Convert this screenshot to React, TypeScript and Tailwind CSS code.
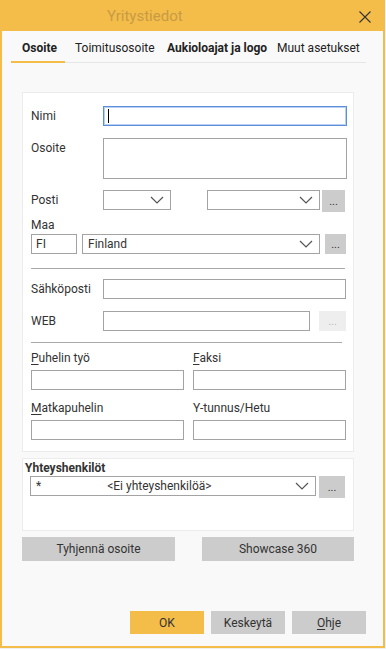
import React from 'react';

const font = { fontFamily: 'Roboto, "Liberation Sans", sans-serif' };

const Chevron: React.FC = () => (
  <svg width="14" height="8" viewBox="0 0 14 8" className="absolute right-[6px] top-1/2 -translate-y-1/2">
    <path d="M1 1 L7 7 L13 1" fill="none" stroke="#555" strokeWidth="1.2" />
  </svg>
);

const Select: React.FC<{ className?: string; children?: React.ReactNode }> = ({ className = '', children }) => (
  <div className={`relative h-[20px] border border-[#a3a3a3] bg-white flex items-center ${className}`}>
    {children}
    <Chevron />
  </div>
);

const Dots: React.FC<{ disabled?: boolean; className?: string }> = ({ disabled, className = '' }) => (
  <div
    className={`flex items-center justify-center text-[11px] leading-none ${
      disabled ? 'bg-[#eeeeee] text-[#bbb]' : 'bg-[#cccccc] text-[#333]'
    } ${className}`}
  >
    ...
  </div>
);

const Input: React.FC<{ className?: string }> = ({ className = '' }) => (
  <div className={`h-[20px] border border-[#a3a3a3] bg-white ${className}`} />
);

export default function App() {
  return (
    <div className="w-[386px] h-[649px] bg-[#f0f0f0] text-[12px] text-[#333]" style={font}>
      <div className="w-[385px] h-[648px] border-2 border-[#f4bd4a] bg-[#f9f9f9] flex flex-col">
        {/* Title bar */}
        <div className="h-[29px] bg-[#f4bd4a] flex items-center justify-between pl-[105px] pr-[12px]">
          <span className="text-[15px] text-[#c79b45]">Yritystiedot</span>
          <svg width="12" height="12" viewBox="0 0 12 12">
            <path d="M0.5 0.5 L11.5 11.5 M11.5 0.5 L0.5 11.5" stroke="#333" strokeWidth="1.1" />
          </svg>
        </div>

        <div className="flex-1 flex flex-col pl-[9px] pr-[17px]">
          {/* Tabs */}
          <div className="mt-[10px] flex border-b border-[#e6e6e6] text-[12px] leading-[14px] text-[#222] whitespace-nowrap">
            <div className="w-[54px] pl-[11px] pb-[6px] font-bold border-b-2 border-[#f4bd4a] -mb-px">Osoite</div>
            <div className="w-[102px] pl-[10px] pb-[6px]">Toimitusosoite</div>
            <div className="w-[110px] pb-[6px] font-bold">Aukioloajat ja logo</div>
            <div className="pb-[6px]">Muut asetukset</div>
          </div>

          {/* Address panel */}
          <div className="ml-[11px] mr-[12px] mt-[29px] bg-white border border-[#ececec] pl-[8px] pr-[6px] pt-[13px] pb-[11px]">
            <div className="flex">
              <div className="w-[72px] pt-[1px]">Nimi</div>
              <div className="flex-1 h-[20px] border border-[#5b8fdb] shadow-[inset_0_0_0_1px_#b9d0f0] bg-white flex items-center pl-[4px]">
                <span className="w-px h-[14px] bg-black" />
              </div>
            </div>
            <div className="flex mt-[12px]">
              <div className="w-[72px] pt-[1px]">Osoite</div>
              <div className="flex-1 h-[41px] border border-[#a3a3a3]" />
            </div>
            <div className="flex mt-[11px]">
              <div className="w-[72px] pt-[1px]">Posti</div>
              <Select className="w-[68px]" />
              <Select className="w-[113px] ml-[36px]" />
              <Dots className="w-[23px] h-[22px] ml-[2px]" />
            </div>
            <div className="mt-[6px] leading-[14px]">Maa</div>
            <div className="flex mt-[2px] pr-[1px]">
              <div className="w-[46px] h-[20px] border border-[#a3a3a3] flex items-center pl-[4px]">FI</div>
              <Select className="w-[238px] ml-[5px] pl-[5px]">Finland</Select>
              <Dots className="w-[21px] h-[20px] ml-[5px]" />
            </div>
            <div className="h-px bg-[#a8a8a8] mt-[14px] mr-[2px]" />
            <div className="flex mt-[10px]">
              <div className="w-[72px] pt-[1px]">Sähköposti</div>
              <Input className="flex-1 mr-px" />
            </div>
            <div className="flex mt-[12px]">
              <div className="w-[72px] pt-[1px]">WEB</div>
              <Input className="w-[207px]" />
              <Dots disabled className="w-[27px] h-[20px] ml-[9px]" />
            </div>
            <div className="h-px bg-[#a8a8a8] mt-[11px] mr-[5px]" />
            <div className="grid grid-cols-2 gap-x-[9px] mt-[8px] mr-px">
              <div>
                <div className="leading-[14px]">
                  <span className="underline underline-offset-2">P</span>uhelin työ
                </div>
                <Input className="mt-[5px]" />
              </div>
              <div>
                <div className="leading-[14px]">
                  <span className="underline underline-offset-2">F</span>aksi
                </div>
                <Input className="mt-[5px]" />
              </div>
              <div className="mt-[11px]">
                <div className="leading-[14px]">
                  <span className="underline underline-offset-2">M</span>atkapuhelin
                </div>
                <Input className="mt-[5px]" />
              </div>
              <div className="mt-[11px]">
                <div className="leading-[14px]">Y-tunnus/Hetu</div>
                <Input className="mt-[5px]" />
              </div>
            </div>
          </div>

          {/* Contact persons */}
          <div className="ml-[11px] mr-[12px] mt-[6px] h-[73px] bg-white border border-[#ececec] pl-[2px] pt-[2px]">
            <div className="font-bold leading-[14px]">Yhteyshenkilöt</div>
            <div className="flex mt-[1px] pl-[5px]">
              <Select className="w-[286px] pl-[5px]">
                <span>*</span>
                <span className="ml-[66px]">&lt;Ei yhteyshenkilöä&gt;</span>
              </Select>
              <Dots className="w-[26px] h-[22px] ml-[3px]" />
            </div>
          </div>

          <div className="ml-[11px] mr-[12px] mt-[6px] flex justify-between">
            <div className="w-[153px] h-[24px] bg-[#cccccc] flex items-center justify-center">Tyhjennä osoite</div>
            <div className="w-[152px] h-[24px] bg-[#cccccc] flex items-center justify-center">Showcase 360</div>
          </div>

          <div className="mt-auto mb-[12px] flex justify-end gap-[7px]">
            <div className="w-[74px] h-[23px] bg-[#f4bd4a] flex items-center justify-center">OK</div>
            <div className="w-[74px] h-[23px] bg-[#cccccc] flex items-center justify-center">Keskeytä</div>
            <div className="w-[74px] h-[23px] bg-[#cccccc] flex items-center justify-center">
              <span>
                <span className="underline underline-offset-2">O</span>hje
              </span>
            </div>
          </div>
        </div>
      </div>
    </div>
  );
}
